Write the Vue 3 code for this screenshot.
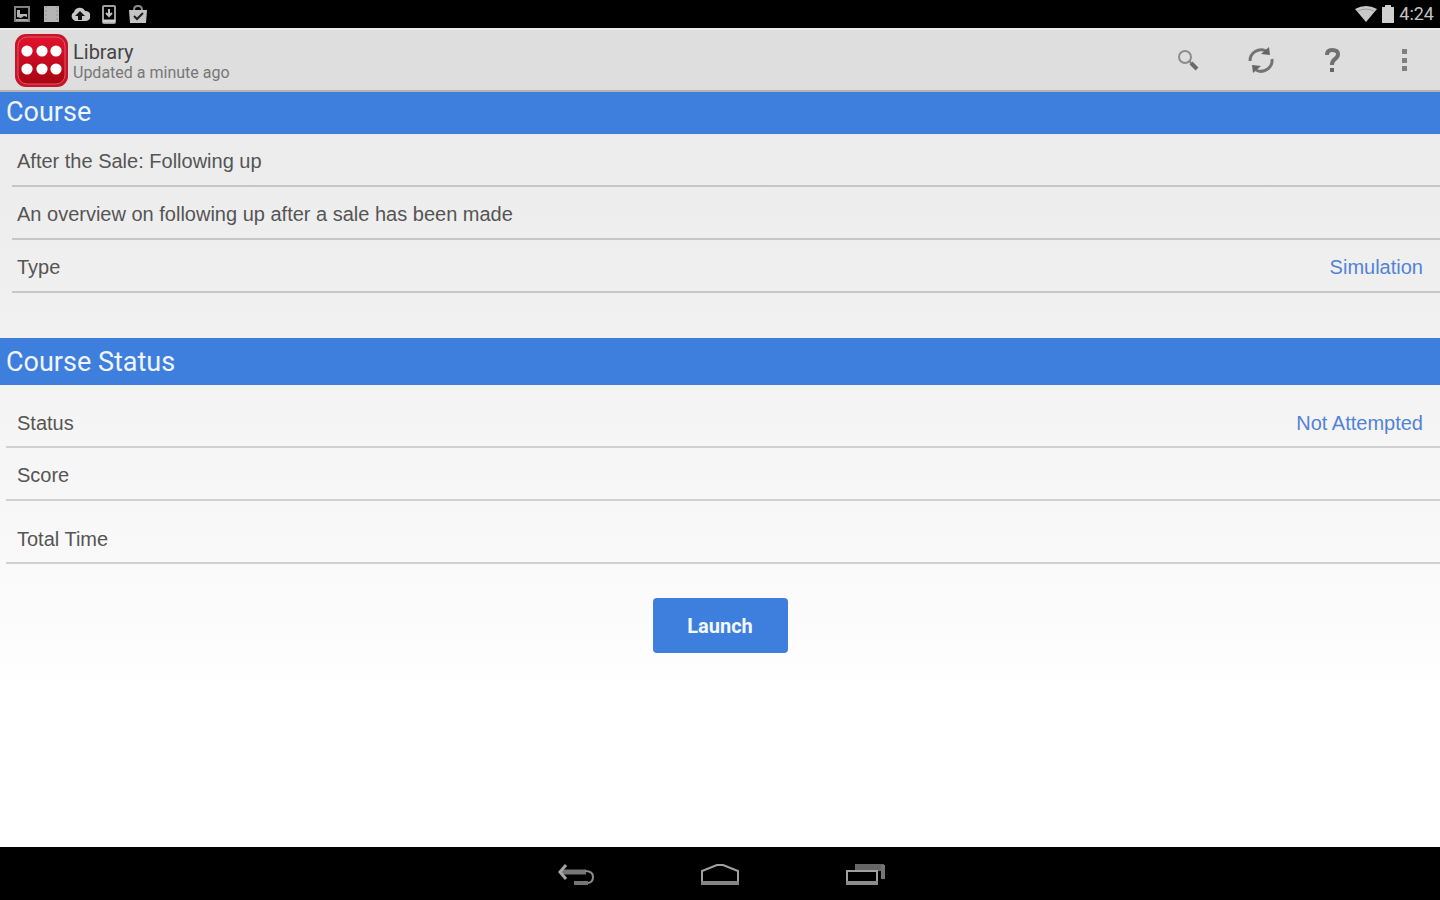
<template>
    <div class="screen">
        <div class="statusbar">
            <div class="notices">
                <svg width="20" height="20" viewBox="0 0 20 20">
                    <rect x="3" y="3" width="14" height="14" fill="none" stroke="#808080" stroke-width="2"/>
                    <path d="M5 6h3v4h7v3l-3-1-3 2-4-1z" fill="#b4b4b4"/>
                    <path d="M4 16h12" stroke="#a8a8a8" stroke-width="2"/>
                </svg>
                <svg width="20" height="20" viewBox="0 0 20 20">
                    <rect x="3" y="2" width="15" height="16" fill="#b4b4b4"/>
                    <path d="M5 2v16M16 2v16" stroke="#929292" stroke-width="1" stroke-dasharray="2 2"/>
                </svg>
                <svg width="20" height="20" viewBox="0 0 20 20">
                    <path d="M5 17a5 5 0 0 1-1-9 6 6 0 0 1 11-1 5 5 0 0 1 1 10z" fill="#c8c8c8"/>
                    <path d="M10 7l5 5h-3v4H8v-4H5z" fill="#111"/>
                </svg>
                <svg width="20" height="20" viewBox="0 0 20 20">
                    <rect x="4" y="2" width="12" height="17" rx="1" fill="none" stroke="#a0a0a0" stroke-width="2"/>
                    <path d="M10 5v7M7 9l3 3 3-3" fill="none" stroke="#c0c0c0" stroke-width="2"/>
                    <path d="M4 17h12" stroke="#d0d0d0" stroke-width="3"/>
                </svg>
                <svg width="20" height="20" viewBox="0 0 20 20">
                    <path d="M1 6h18l-1 13H2z" fill="#c4c4c4"/>
                    <path d="M6 6q0-4 4-4t4 4" fill="none" stroke="#8c8c8c" stroke-width="2"/>
                    <path d="M6 12l3 3 6-6" fill="none" stroke="#222" stroke-width="2"/>
                </svg>
            </div>
            <div class="system">
                <svg width="22" height="20" viewBox="0 0 22 20">
                    <path d="M0 5q11-6 22 0L11 18z" fill="#c8c8c8"/>
                    <path d="M3 7q8-4 16 0" fill="none" stroke="#9a9a9a" stroke-width="1"/>
                </svg>
                <svg width="14" height="20" viewBox="0 0 14 20">
                    <path d="M1 3h3V1h6v2h3v16H1z" fill="#d0d0d0"/>
                </svg>
                <span class="clock">4:24</span>
            </div>
        </div>

        <header class="actionbar">
            <svg class="logo" width="54" height="54" viewBox="0 0 54 54">
                <defs>
                    <linearGradient id="red" x1="0" y1="0" x2="0" y2="1">
                        <stop offset="0" stop-color="#e2122f"/>
                        <stop offset="1" stop-color="#a80512"/>
                    </linearGradient>
                </defs>
                <rect x="1" y="1" width="53" height="53" rx="11" fill="#c9142a"/>
                <rect x="4" y="4" width="47" height="47" rx="9" fill="url(#red)" stroke="#dc5a66" stroke-width="1"/>
                <circle v-for="dot in dots" :key="dot.id" :cx="dot.x" :cy="dot.y" r="5.6" fill="#fff"/>
            </svg>
            <div class="titles">
                <h1>Library</h1>
                <p>Updated a minute ago</p>
            </div>
            <div class="actions">
                <button type="button" aria-label="Search">
                    <svg width="26" height="26" viewBox="0 0 26 26" fill="none">
                        <circle cx="10" cy="10" r="6" stroke="#8c8c8c" stroke-width="2"/>
                        <path d="M14 14l3 3" stroke="#858585" stroke-width="2"/>
                        <path d="M16 16l6 6" stroke="#6a6a6a" stroke-width="4"/>
                    </svg>
                </button>
                <button type="button" aria-label="Refresh">
                    <svg width="30" height="30" viewBox="0 0 30 30" fill="none">
                        <path d="M5 16A11 11 0 0 1 21 6" stroke="#747474" stroke-width="3"/>
                        <path d="M27 14A11 11 0 0 1 11 25" stroke="#747474" stroke-width="3"/>
                        <path d="M24 2l1 8-9-1z" fill="#666"/>
                        <path d="M8 28l-1-8 9 1z" fill="#666"/>
                    </svg>
                </button>
                <button type="button" aria-label="Help">
                    <svg width="26" height="26" viewBox="0 0 26 26" fill="none">
                        <path d="M8 8q0-5 5-5 6 0 6 4 0 3-3 5t-3 6" stroke="#707070" stroke-width="4"/>
                        <rect x="11" y="21" width="4" height="4" fill="#666"/>
                    </svg>
                </button>
                <button type="button" aria-label="More options">
                    <svg width="26" height="26" viewBox="0 0 26 26" fill="#808080">
                        <rect x="11" y="2" width="5" height="5"/>
                        <rect x="11" y="11" width="5" height="5"/>
                        <rect x="11" y="19" width="5" height="5"/>
                    </svg>
                </button>
            </div>
        </header>

        <main class="content">
            <section class="course">
                <h2>Course</h2>
                <div class="row">After the Sale: Following up</div>
                <div class="row">An overview on following up after a sale has been made</div>
                <div class="row">
                    <span>Type</span>
                    <span class="value">Simulation</span>
                </div>
            </section>
            <section class="status">
                <h2>Course Status</h2>
                <div class="row tall">
                    <span>Status</span>
                    <span class="value">Not Attempted</span>
                </div>
                <div class="row">Score</div>
                <div class="row tall">Total Time</div>
            </section>
            <button type="button" class="launch">Launch</button>
        </main>

        <nav class="navbar">
            <button type="button" aria-label="Back">
                <svg width="40" height="28" viewBox="0 0 40 28" fill="none">
                    <path d="M7 12H31" stroke="#747474" stroke-width="5"/>
                    <path d="M30 11q8 0 8 6t-6 6" stroke="#8c8c8c" stroke-width="2"/>
                    <path d="M33 23H19" stroke="#747474" stroke-width="4"/>
                    <path d="M11 5L5 12l6 7" stroke="#a5a5a5" stroke-width="3"/>
                </svg>
            </button>
            <button type="button" aria-label="Home">
                <svg width="40" height="28" viewBox="0 0 40 28" fill="none">
                    <path d="M2 24V11L17 5h6l15 6v13z" stroke="#a0a0a0" stroke-width="2"/>
                    <path d="M1 23h38" stroke="#858585" stroke-width="4"/>
                </svg>
            </button>
            <button type="button" aria-label="Recent apps">
                <svg width="40" height="28" viewBox="0 0 40 28" fill="none">
                    <path d="M10 12V4h29v7z" fill="#666"/>
                    <path d="M38 5v14" stroke="#747474" stroke-width="4"/>
                    <rect x="2" y="11" width="30" height="13" fill="#000" stroke="#a0a0a0" stroke-width="2"/>
                    <path d="M1 23h32" stroke="#8c8c8c" stroke-width="4"/>
                </svg>
            </button>
        </nav>
    </div>
</template>

<script setup>
// two rows of three dots on the app logo
const dots = [13, 28, 42].flatMap(x => [18, 36].map(y => ({ id: `${x}-${y}`, x, y })))
</script>

<style>
    body{
        margin: 0;
    }
</style>

<style scoped>
    .screen{
        min-height: 100vh;
        display: flex;
        flex-direction: column;
        font-family: "Liberation Sans", Arial, sans-serif;
        color: #555;
    }
    h1, h2, p{
        margin: 0;
        font-weight: 400;
    }
    button{
        border: 0;
        padding: 0;
        background: none;
        cursor: pointer;
    }
    svg{
        display: block;
        flex: none;
    }
    .statusbar{
        height: 28px;
        padding: 0 6px 0 12px;
        background: #000;
        display: flex;
        justify-content: space-between;
        align-items: center;
    }
    .notices{
        display: flex;
        gap: 9px;
    }
    .system{
        display: flex;
        align-items: center;
        gap: 4px;
    }
    .clock{
        color: #c4c4c4;
        font: 18px/28px Roboto, sans-serif;
    }
    .actionbar{
        height: 64px;
        box-sizing: border-box;
        padding-left: 14px;
        background: #dedede;
        border-top: 2px solid #ececec;
        border-bottom: 2px solid #b4b4b4;
        display: flex;
        align-items: center;
    }
    .titles{
        margin-left: 5px;
        padding-top: 4px;
        flex: 1;
        font-family: Roboto, sans-serif;
    }
    .titles h1{
        font-size: 20px;
        line-height: 22px;
        color: #444;
    }
    .titles p{
        font-size: 16px;
        line-height: 20px;
        color: #777;
    }
    .actions{
        display: flex;
    }
    .actions button{
        width: 72px;
        height: 60px;
        display: flex;
        justify-content: center;
        align-items: center;
    }
    .content{
        flex: 1;
        display: flex;
        flex-direction: column;
        background: linear-gradient(#ebebeb, #f0f0f0 28%, #f4f4f4 40%, #f9f9f9 62%, #fff 80%);
    }
    h2{
        padding: 2px 0 0 6px;
        background: #3e7fdd;
        color: #f0f5fd;
        font: 27px/45px Roboto, sans-serif;
    }
    .course{
        padding-bottom: 45px;
    }
    .course h2{
        padding: 0 0 2px 6px;
        line-height: 40px;
    }
    .row{
        height: 53px;
        box-sizing: border-box;
        margin-left: 12px;
        padding: 2px 17px 0 5px;
        border-bottom: 2px solid #c6c6c6;
        display: flex;
        justify-content: space-between;
        align-items: center;
        font-size: 20px;
        line-height: 24px;
    }
    .status .row{
        margin-left: 6px;
        padding-left: 11px;
        border-color: #d0d0d0;
    }
    .status .tall{
        height: 63px;
        padding-top: 14px;
    }
    .value{
        color: #5283d6;
    }
    .launch{
        align-self: center;
        margin-top: 34px;
        width: 135px;
        height: 55px;
        border-radius: 4px;
        background: #3e7fdd;
        color: #f4f8ff;
        font: bold 20px/24px Roboto, sans-serif;
    }
    .navbar{
        height: 53px;
        background: #000;
        display: flex;
        justify-content: center;
    }
    .navbar button{
        width: 145px;
        display: flex;
        justify-content: center;
        align-items: center;
    }
</style>
